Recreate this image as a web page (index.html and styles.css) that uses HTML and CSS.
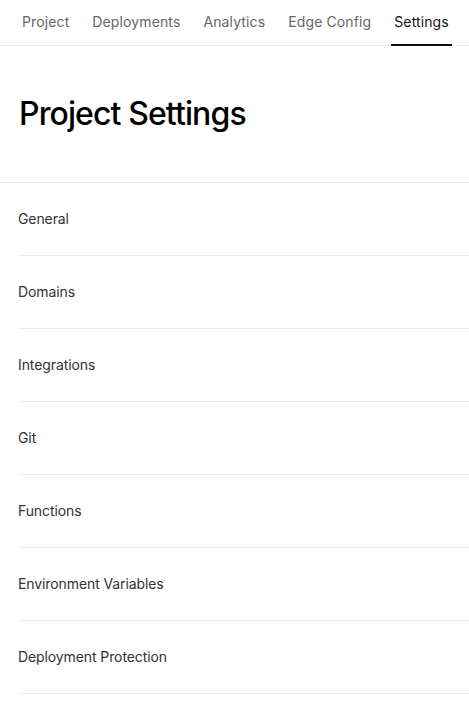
FILE: index.html
```html
<!DOCTYPE html>
<html>
<head>
<meta charset="utf-8">
<link rel="stylesheet" href="styles.css">
</head>
<body>
<nav class="tabs">
  <a class="tab">Project</a>
  <a class="tab">Deployments</a>
  <a class="tab">Analytics</a>
  <a class="tab">Edge Config</a>
  <a class="tab active">Settings</a>
</nav>
<header class="title">
  <h1>Project Settings</h1>
</header>
<ul class="menu">
  <li>General</li>
  <li>Domains</li>
  <li>Integrations</li>
  <li>Git</li>
  <li>Functions</li>
  <li>Environment Variables</li>
  <li>Deployment Protection</li>
</ul>
</body>
</html>
```
FILE: styles.css
```css
* { box-sizing: border-box; }
html, body { margin: 0; padding: 0; background: #fff; }
body {
  font-family: Inter, "Noto Sans", sans-serif;
  color: #171717;
  overflow: hidden;
}
.tabs {
  display: flex;
  gap: 17px;
  padding-left: 19px;
  height: 46px;
  border-bottom: 1px solid #ebebeb;
  white-space: nowrap;
}
.tab {
  display: flex;
  align-items: center;
  padding: 0 3px 2px;
  font-size: 14px;
  letter-spacing: 0.12px;
  color: #666;
  border-bottom: 2px solid transparent;
  margin-bottom: -1px;
}
.tab.active {
  color: #111;
  border-bottom-color: #111;
}
.title {
  height: 137px;
  border-bottom: 1px solid #ebebeb;
  padding: 48px 0 0 19px;
}
.title h1 {
  margin: 0;
  font-size: 32px;
  font-weight: 500;
  letter-spacing: -0.9px;
  line-height: 40px;
  color: #000;
}
.menu {
  list-style: none;
  margin: 0;
  padding: 0 0 0 18px;
}
.menu li {
  height: 73px;
  display: flex;
  align-items: center;
  padding-bottom: 2px;
  border-bottom: 1px solid #ebebeb;
  font-size: 14px;
  letter-spacing: -0.1px;
  color: #333;
}
```
